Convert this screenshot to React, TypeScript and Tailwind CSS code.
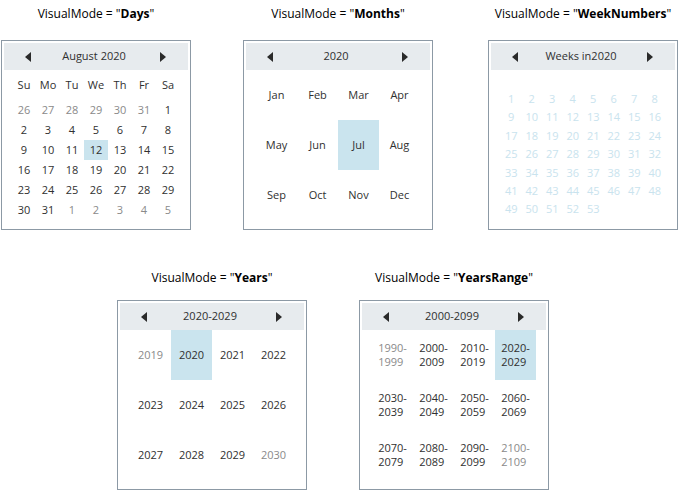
import React from "react";

const TEXT = "text-[#303030]";
const MUTED = "text-[#8a8a8a]";

function Arrow({ dir }: { dir: "left" | "right" }) {
  return (
    <svg width="6" height="10" viewBox="0 0 6 10" className="block">
      {dir === "left" ? (
        <polygon points="6,0 6,10 0,5" fill="#2a2a2a" />
      ) : (
        <polygon points="0,0 0,10 6,5" fill="#2a2a2a" />
      )}
    </svg>
  );
}

function Header({ label }: { label: string }) {
  return (
    <div className="flex h-[27px] items-center bg-[#e7ebee]">
      <div className="flex w-[47px] justify-center">
        <Arrow dir="left" />
      </div>
      <div className={`flex-1 text-center text-[11px] ${TEXT}`}>{label}</div>
      <div className="flex w-[51px] justify-center">
        <Arrow dir="right" />
      </div>
    </div>
  );
}

function Title({ mode }: { mode: string }) {
  return (
    <div className="flex h-[27px] items-center justify-center whitespace-nowrap text-[12px] text-black">
      VisualMode = "<span className="font-bold">{mode}</span>"
    </div>
  );
}

function Box({ children }: { children: React.ReactNode }) {
  return (
    <div className="flex h-[190px] w-[190px] flex-col border border-[#8c99a5] bg-white p-[2px]">
      {children}
    </div>
  );
}

type Cell = { t: string; muted?: boolean; sel?: boolean };

function DaysCalendar() {
  const names = ["Su", "Mo", "Tu", "We", "Th", "Fr", "Sa"];
  const days: Cell[] = [];
  [26, 27, 28, 29, 30, 31].forEach((d) => days.push({ t: String(d), muted: true }));
  for (let d = 1; d <= 31; d++) days.push({ t: String(d), sel: d === 12 });
  [1, 2, 3, 4, 5].forEach((d) => days.push({ t: String(d), muted: true }));
  return (
    <Box>
      <Header label="August 2020" />
      <div className="mx-auto grid h-[30px] w-[168px] grid-cols-7 items-center">
        {names.map((n) => (
          <div key={n} className={`text-center text-[11px] ${TEXT}`}>
            {n}
          </div>
        ))}
      </div>
      <div className="mx-auto grid w-[168px] grid-cols-7 auto-rows-[20px]">
        {days.map((c, i) => (
          <div
            key={i}
            className={`flex items-center justify-center text-[11px] ${c.muted ? MUTED : TEXT} ${
              c.sel ? "bg-[#cae4ee]" : ""
            }`}
          >
            {c.t}
          </div>
        ))}
      </div>
    </Box>
  );
}

function BigGrid({ cells }: { cells: Cell[] }) {
  return (
    <div className="mx-auto grid w-[164px] grid-cols-4 auto-rows-[50px]">
      {cells.map((c, i) => (
        <div
          key={i}
          className={`flex items-center justify-center text-[11px] ${c.muted ? MUTED : TEXT} ${
            c.sel ? "bg-[#cae4ee]" : ""
          }`}
        >
          {c.t.includes("-") ? (
            <span className="inline-block text-left leading-[14px]">
              {c.t.split("-")[0]}-
              <br />
              {c.t.split("-")[1]}
            </span>
          ) : (
            c.t
          )}
        </div>
      ))}
    </div>
  );
}

function MonthsCalendar() {
  const months = ["Jan", "Feb", "Mar", "Apr", "May", "Jun", "Jul", "Aug", "Sep", "Oct", "Nov", "Dec"];
  return (
    <Box>
      <Header label="2020" />
      <BigGrid cells={months.map((m) => ({ t: m, sel: m === "Jul" }))} />
    </Box>
  );
}

function WeeksCalendar() {
  const weeks = Array.from({ length: 53 }, (_, i) => i + 1);
  return (
    <Box>
      <Header label="Weeks in2020" />
      <div className="mx-auto mt-[20px] grid w-[164px] grid-cols-8 auto-rows-[18.4px]">
        {weeks.map((w) => (
          <div key={w} className="flex items-center justify-center text-[11px] text-[#c9e3ee]">
            {w}
          </div>
        ))}
      </div>
    </Box>
  );
}

function YearsCalendar() {
  const years = Array.from({ length: 12 }, (_, i) => 2019 + i);
  return (
    <Box>
      <Header label="2020-2029" />
      <BigGrid
        cells={years.map((y) => ({
          t: String(y),
          muted: y === 2019 || y === 2030,
          sel: y === 2020,
        }))}
      />
    </Box>
  );
}

function YearsRangeCalendar() {
  const starts = Array.from({ length: 12 }, (_, i) => 1990 + i * 10);
  return (
    <Box>
      <Header label="2000-2099" />
      <BigGrid
        cells={starts.map((s) => ({
          t: `${s}-${s + 9}`,
          muted: s === 1990 || s === 2100,
          sel: s === 2020,
        }))}
      />
    </Box>
  );
}

function Column({ mode, children, className }: { mode: string; children: React.ReactNode; className: string }) {
  return (
    <div className={`flex w-[190px] flex-col ${className}`}>
      <Title mode={mode} />
      {children}
    </div>
  );
}

export default function App() {
  return (
    <div className="h-[493px] w-[681px] bg-white font-['Open_Sans',sans-serif]">
      <div className="flex">
        <Column mode="Days" className="ml-[1px]">
          <div className="mt-[13px]">
            <DaysCalendar />
          </div>
        </Column>
        <Column mode="Months" className="ml-[52px]">
          <div className="mt-[13px]">
            <MonthsCalendar />
          </div>
        </Column>
        <Column mode="WeekNumbers" className="ml-[55px]">
          <div className="mt-[13px]">
            <WeeksCalendar />
          </div>
        </Column>
      </div>
      <div className="mt-[34px] flex">
        <Column mode="Years" className="ml-[117px]">
          <div className="mt-[9px]">
            <YearsCalendar />
          </div>
        </Column>
        <Column mode="YearsRange" className="ml-[52px]">
          <div className="mt-[9px]">
            <YearsRangeCalendar />
          </div>
        </Column>
      </div>
    </div>
  );
}
